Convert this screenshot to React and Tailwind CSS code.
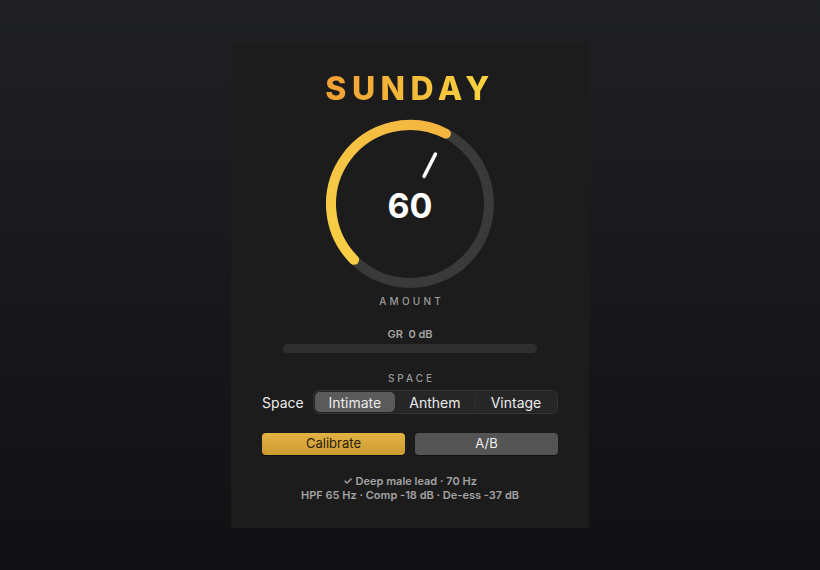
import React, { useState } from 'react';

const font = { fontFamily: 'Inter, "Noto Sans", sans-serif' };

function Knob({ value }) {
  // 270° sweep starting at 7:30 position
  const cx = 90, cy = 90, r = 79;
  const start = 135;
  const end = start + (value / 100) * 270;
  const pt = (deg, rad) => [cx + rad * Math.cos((deg * Math.PI) / 180), cy + rad * Math.sin((deg * Math.PI) / 180)];
  const [sx, sy] = pt(start, r);
  const [ex, ey] = pt(end, r);
  const large = end - start > 180 ? 1 : 0;
  const [p1x, p1y] = pt(end, 31);
  const [p2x, p2y] = pt(end, 56);

  return (
    <div className="relative w-[180px] h-[180px]">
      <svg width="180" height="180" viewBox="0 0 180 180">
        <defs>
          <linearGradient id="arcGrad" x1="0" y1="1" x2="1" y2="0">
            <stop offset="0%" stopColor="#f8d046" />
            <stop offset="100%" stopColor="#f3b43f" />
          </linearGradient>
        </defs>
        <circle cx={cx} cy={cy} r={r} fill="none" stroke="#3a3a3a" strokeWidth="10" />
        <path
          d={`M${sx} ${sy} A${r} ${r} 0 ${large} 1 ${ex} ${ey}`}
          fill="none"
          stroke="url(#arcGrad)"
          strokeWidth="10"
          strokeLinecap="round"
        />
        <line x1={p1x} y1={p1y} x2={p2x} y2={p2y} stroke="#ffffff" strokeWidth="3.5" strokeLinecap="round" />
      </svg>
      <div className="absolute inset-0 flex items-center justify-center pt-[4px]">
        <span className="text-[34px] font-bold text-white leading-none">{value}</span>
      </div>
    </div>
  );
}

export default function App() {
  const [space, setSpace] = useState('Intimate');
  const modes = ['Intimate', 'Anthem', 'Vintage'];

  return (
    <div
      className="w-full h-[570px] flex items-center justify-center bg-gradient-to-b from-[#1f2023] to-[#111114]"
      style={font}
    >
      <div className="w-[358px] h-[486px] bg-[#1c1c1c] flex flex-col items-center px-[31px] pt-[31px]">
        <h1 className="text-[32px] leading-[32px] font-extrabold tracking-[0.17em] bg-gradient-to-r from-[#f09f33] to-[#f8d640] bg-clip-text text-transparent">
          SUNDAY
        </h1>

        <div className="mt-[9px]">
          <Knob value={60} />
        </div>

        <div className="text-[10px] leading-[14px] tracking-[0.32em] pl-[0.32em] text-[#9b9b9b] font-medium">AMOUNT</div>

        <div className="mt-[19px] text-[11px] leading-[14px] font-semibold text-[#a3a3a3]">GR&nbsp; 0 dB</div>
        <div className="mt-[3px] w-[254px] h-[9px] rounded-full bg-[#2f2f2f]" />

        <div className="mt-[18px] text-[10px] leading-[14px] tracking-[0.3em] pl-[0.3em] text-[#9b9b9b] font-medium">SPACE</div>

        <div className="mt-[5px] w-full flex items-center gap-[9px]">
          <span className="text-[14px] text-[#ececec]">Space</span>
          <div className="flex-1 h-[24px] flex items-center rounded-[6px] bg-[#262626] border border-[#333333] p-[1px]">
            {modes.map((m, i) => (
              <button
                key={m}
                onClick={() => setSpace(m)}
                className={
                  'flex-1 h-full text-[14px] rounded-[5px] text-[#ececec] ' +
                  (space === m ? 'bg-[#5a5a5a]' : '') +
                  (i === 2 && space !== 'Vintage' && space !== 'Anthem' ? ' border-l border-[#303030]' : '')
                }
              >
                {m}
              </button>
            ))}
          </div>
        </div>

        <div className="mt-[19px] w-full flex gap-[10px]">
          <button className="flex-1 h-[22px] rounded-[4px] bg-gradient-to-b from-[#e3b243] to-[#cc9c32] text-[13px] text-[#2a2108] shadow-[0_1px_0_rgba(0,0,0,0.4)]">
            Calibrate
          </button>
          <button className="flex-1 h-[22px] rounded-[4px] bg-[#545454] text-[13px] text-[#f0f0f0] shadow-[0_1px_0_rgba(0,0,0,0.4)]">
            A/B
          </button>
        </div>

        <div className="mt-[19px] text-[11px] leading-[14px] font-semibold text-[#a3a3a3] text-center">
          <div>✓ Deep male lead · 70 Hz</div>
          <div>HPF 65 Hz · Comp -18 dB · De-ess -37 dB</div>
        </div>
      </div>
    </div>
  );
}
